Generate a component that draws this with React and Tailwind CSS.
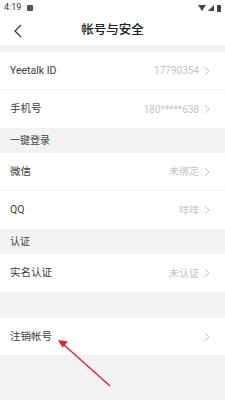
import React from 'react';

const font = { fontFamily: 'Roboto, "Noto Sans CJK SC", sans-serif' };

const Chevron = () => (
  <svg width="6" height="10" viewBox="0 0 6 10" className="ml-[5px]">
    <path d="M1 1l4 4-4 4" fill="none" stroke="#c8c8c8" strokeWidth="1" />
  </svg>
);

const Row = ({ label, value, h = 'h-[38px]', divider }) => (
  <div className={`flex items-center justify-between bg-white pl-[10px] pr-[15px] ${h} ${divider ? 'border-b border-[#f0f0f0]' : ''}`}>
    <span className="text-[10.5px] text-[#3c3c3c]">{label}</span>
    <div className="flex items-center">
      {value && <span className="text-[10px] text-[#c4c4c4]">{value}</span>}
      <Chevron />
    </div>
  </div>
);

const Section = ({ title, h = 'h-[25px]' }) => (
  <div className={`flex items-center bg-[#f3f3f3] pl-[10px] ${h}`}>
    <span className="text-[10px] text-[#444]">{title}</span>
  </div>
);

export default function App() {
  return (
    <div className="relative w-[225px] h-[400px] bg-[#f3f3f3] overflow-hidden" style={font}>
      {/* status bar */}
      <div className="flex items-center justify-between bg-white h-[16px] px-[4px]">
        <div className="flex items-center gap-[6px]">
          <span className="text-[9px] text-[#333]">4:19</span>
          <div className="w-[6px] h-[6px] bg-[#555] rounded-[1px]" />
        </div>
        <div className="flex items-center gap-[2px]">
          <svg width="8" height="6" viewBox="0 0 8 6"><path d="M0 0h8L4 6z" fill="#444" /></svg>
          <svg width="6" height="6" viewBox="0 0 6 6"><path d="M6 0v6H0z" fill="#444" /></svg>
          <div className="w-[4px] h-[7px] bg-[#444] rounded-[1px] ml-[1px]" />
        </div>
      </div>
      {/* header */}
      <div className="relative flex items-center justify-center bg-white h-[29px]">
        <svg width="8" height="14" viewBox="0 0 8 14" className="absolute left-[14px]">
          <path d="M7 1L1 7l6 6" fill="none" stroke="#333" strokeWidth="1.2" />
        </svg>
        <span className="text-[12.5px] font-medium text-[#222]">帐号与安全</span>
      </div>
      <div className="h-[7px]" />
      <Row label="Yeetalk ID" value="17790354" h="h-[38px]" divider />
      <Row label="手机号" value="180*****638" />
      <Section title="一键登录" />
      <Row label="微信" value="未绑定" divider />
      <Row label="QQ" value="咩咩" />
      <Section title="认证" />
      <Row label="实名认证" value="未认证" />
      <div className="h-[26px]" />
      <Row label="注销帐号" h="h-[37px]" />
      {/* annotation arrow */}
      <svg className="absolute left-0 top-0" width="225" height="400" viewBox="0 0 225 400">
        <line x1="110" y1="386" x2="63" y2="344" stroke="#e8202a" strokeWidth="1.4" />
        <path d="M58 340l10 1.5-5.5 6z" fill="#e8202a" />
      </svg>
    </div>
  );
}
